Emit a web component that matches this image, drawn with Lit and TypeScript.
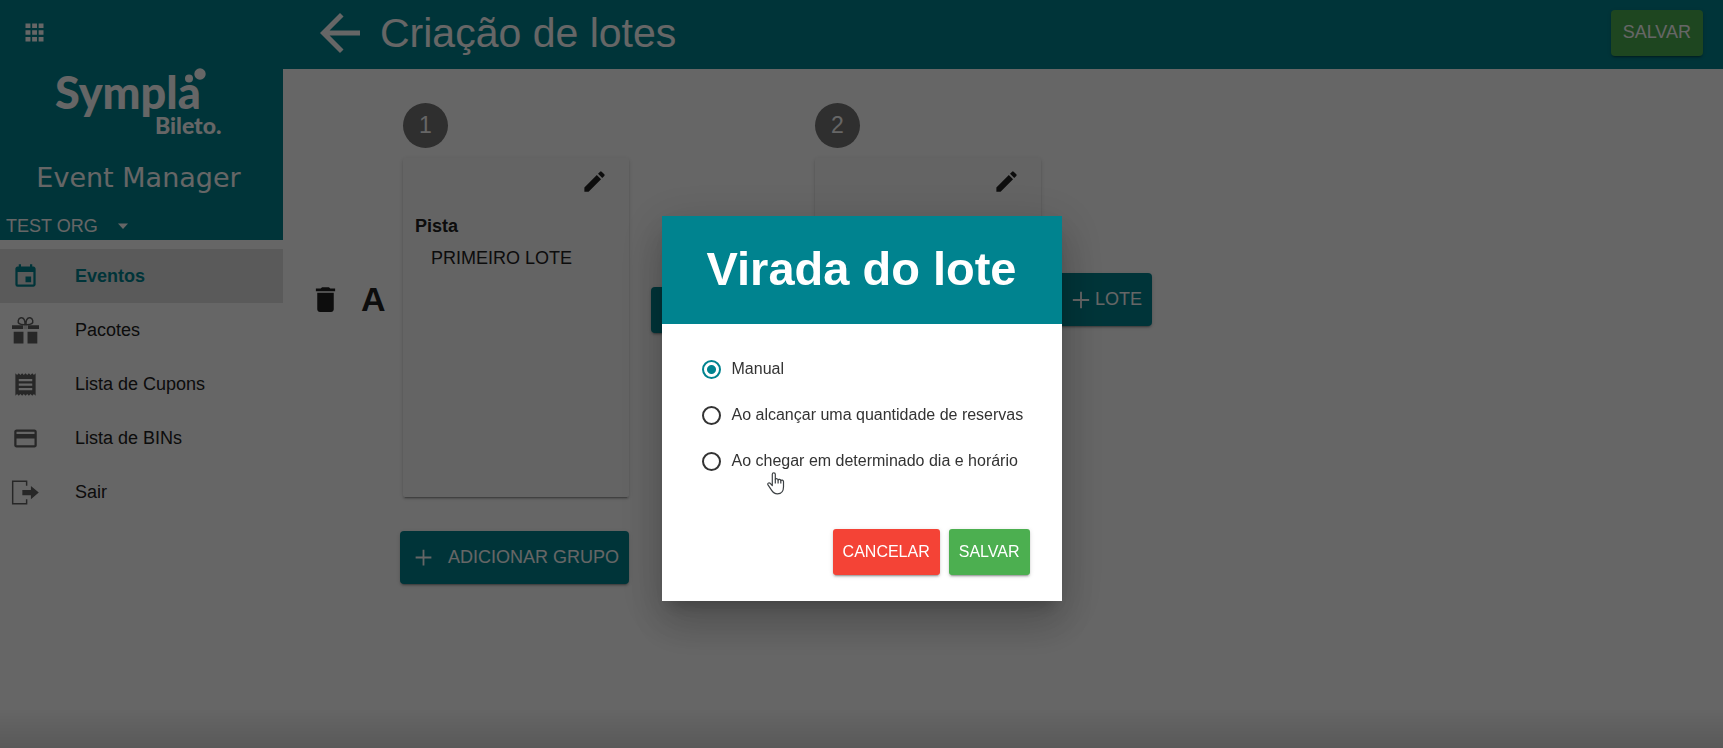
import { LitElement, html, css, svg, nothing } from "lit";
import { customElement, property, state } from "lit/decorators.js";
import { classMap } from "lit/directives/class-map.js";

const icons = {
  apps: svg`<path d="M4 8h4.4V4H4zm5.900 0h4.300V4H9.900zM4 14h4.400v-4H4zm5.900 0h4.300v-4H9.900zM4 20h4.400v-4H4zm5.900 0h4.300v-4H9.900zM15.700 4v4H20V4zm0 10H20v-4h-4.300zm0 6H20v-4h-4.300z"/>`,
  back: svg`<path d="M20 11H7.830l5.590-5.590L12 4l-8 8 8 8 1.410-1.410L7.830 13H20v-2z"/>`,
  edit: svg`<path d="M3 17.250V21h3.750L17.810 9.940l-3.750-3.750L3 17.250zM20.710 7.040a1 1 0 0 0 0-1.410l-2.340-2.340a1 1 0 0 0-1.410 0l-1.830 1.830 3.750 3.750 1.830-1.830z"/>`,
  trash: svg`<path d="M6 19c0 1.100.9 2 2 2h8c1.100 0 2-.9 2-2V7H6v12zM19 4h-3.500l-1-1h-5l-1 1H5v2h14V4z"/>`,
  add: svg`<path d="M19 12.800h-6.200V19h-1.600v-6.200H5v-1.600h6.200V5h1.600v6.200H19z"/>`,
  caret: svg`<path d="M7 9.500l5 5.500 5-5.500z"/>`,
  calendar: svg`<path d="M17 12h-5v5h5v-5zM16 1v2H8V1H6v2H5c-1.110 0-1.990.9-1.990 2L3 19a2 2 0 0 0 2 2h14c1.100 0 2-.9 2-2V5c0-1.100-.9-2-2-2h-1V1h-2zm3 18H5V8h14v11z"/>`,
  gift: svg`<path d="M0 7.300h9.800v3.400H0zM14.200 7.300H24v3.400h-9.800zM1.500 13h8.700v10.500H1.500zM13.800 13h8.700v10.500h-8.700z"/><path d="M10.200 7.500h3.600v3.200h-3.600z" fill-opacity=".25"/><path d="M11.500 6.800C6.500 7 5 5.500 5.600 3 6.200.3 9.500-.3 10.900 2.300c.6 1.200.8 2.800.6 4.500zM12.500 6.800c5 .2 6.500-1.300 5.900-3.800-.6-2.700-3.900-3.300-5.300-.7-.6 1.200-.8 2.800-.6 4.500z" fill="none" stroke="currentColor" stroke-width="1.300"/>`,
  receipt: svg`<path d="M18 17H6v-2h12v2zm0-4H6v-2h12v2zm0-4H6V7h12v2zM3 22l1.500-1.500L6 22l1.500-1.500L9 22l1.500-1.500L12 22l1.500-1.500L15 22l1.500-1.500L18 22l1.500-1.500L21 22V2l-1.500 1.500L18 2l-1.500 1.500L15 2l-1.500 1.500L12 2l-1.500 1.500L9 2 7.500 3.500 6 2 4.500 3.500 3 2v20z"/>`,
  card: svg`<path d="M20 4H4c-1.110 0-1.990.89-1.990 2L2 18c0 1.110.89 2 2 2h16c1.110 0 2-.89 2-2V6c0-1.110-.89-2-2-2zm0 14H4v-6h16v6zm0-10H4V6h16v2z"/>`,
  exit: svg`<path d="M13 6V2H.600v20H13v-4" fill="none" stroke="currentColor" stroke-width="1.300"/><path d="M9.200 9.700h7.600V6.200l7 5.900-7 5.900v-3.500H9.200z"/>`,
};

type IconName = keyof typeof icons;

@customElement("ui-icon")
class UiIcon extends LitElement {
  @property() name: IconName = "add";
  @property({ type: Number }) size = 27;

  static styles = css`
    :host { display: inline-flex; flex: none; }
    .glyph { display: block; fill: currentColor; overflow: visible; }
  `;

  render() {
    return html`<svg class="glyph" width=${this.size} height=${this.size} viewBox="0 0 24 24" aria-hidden="true">${icons[this.name]}</svg>`;
  }
}

interface Entry { label: string; icon: IconName; }

@customElement("side-nav")
class SideNav extends LitElement {
  private entries: Entry[] = [
    { label: "Eventos", icon: "calendar" },
    { label: "Pacotes", icon: "gift" },
    { label: "Lista de Cupons", icon: "receipt" },
    { label: "Lista de BINs", icon: "card" },
    { label: "Sair", icon: "exit" },
  ];

  static styles = css`
    :host { display: block; background: #fff; }
    .head { background: #00838f; color: #fff; padding-top: 19px; }
    .apps { display: block; margin: 0 0 20px 21px; padding: 0; border: 0; background: none; color: inherit; height: 27px; }
    .logo { display: block; margin-left: 54px; fill: #fff; font-family: Lato, "Open Sans", sans-serif; font-weight: 900; }
    .brand { font-size: 45px; }
    .sub { font-size: 23px; }
    .product { margin: 22px 0 18px; padding-right: 6px; text-align: center; font: 27px/32px "DejaVu Sans", Verdana, sans-serif; }
    .org { display: flex; align-items: center; gap: 12px; height: 28px; padding-left: 6px; }
    .select { appearance: none; border: 0; padding: 0; margin: 0; background: none; color: inherit; font: inherit; }
    .list { list-style: none; margin: 0; padding: 9px 0 0; }
    .item { display: flex; align-items: center; gap: 36px; height: 54px; padding-left: 12px; color: #212121; text-decoration: none; }
    .item ui-icon { color: #616161; }
    .active { background: #e0e0e0; color: #00838f; font-weight: bold; }
    .active ui-icon { color: #00838f; }
  `;

  render() {
    return html`
      <header class="head">
        <button class="apps" aria-label="Aplicativos"><ui-icon name="apps"></ui-icon></button>
        <svg class="logo" width="170" height="74" viewBox="0 0 170 74">
          <text class="brand" x="1" y="43">Sympla</text>
          <circle cx="135" cy="12.500" r="4" />
          <circle cx="146" cy="8" r="5.700" />
          <text class="sub" x="101" y="68">Bileto.</text>
        </svg>
        <div class="product">Event Manager</div>
        <div class="org">
          <select class="select" aria-label="Organização"><option>TEST ORG</option></select>
          <ui-icon name="caret" size="24"></ui-icon>
        </div>
      </header>
      <nav>
        <ul class="list">
          ${this.entries.map((e, i) => html`<li>
            <a href="#" class=${classMap({ item: true, active: i === 0 })}><ui-icon name=${e.icon}></ui-icon>${e.label}</a>
          </li>`)}
        </ul>
      </nav>
    `;
  }
}

@customElement("lot-card")
class LotCard extends LitElement {
  @property() sector = "";
  @property() lot = "";

  static styles = css`
    :host { display: block; box-sizing: border-box; background: #fafafa; padding: 10px 12px; border-radius: 2px;
      box-shadow: 0 3px 1px -2px rgba(0,0,0,.2), 0 2px 2px rgba(0,0,0,.14), 0 1px 5px rgba(0,0,0,.12); }
    .edit { display: block; margin: 0 9px 0 auto; padding: 0; border: 0; background: none; color: #212121; height: 27px; }
    .sector { margin: 19px 0 8px; font-size: 18px; line-height: 24px; font-weight: bold; }
    .lot { margin: 0 0 0 16px; line-height: 24px; }
  `;

  render() {
    return html`
      <button class="edit" aria-label="Editar"><ui-icon name="edit"></ui-icon></button>
      ${this.sector ? html`<h2 class="sector">${this.sector}</h2><p class="lot">${this.lot}</p>` : nothing}
    `;
  }
}

@customElement("turn-dialog")
class TurnDialog extends LitElement {
  @state() private selected = 0;
  private options = [
    "Manual",
    "Ao alcançar uma quantidade de reservas",
    "Ao chegar em determinado dia e horário",
  ];

  static styles = css`
    :host { position: relative; display: block; width: 400px; background: #fff; color: #333; font-size: 16px;
      box-shadow: 0 11px 15px -7px rgba(0,0,0,.2), 0 24px 38px 3px rgba(0,0,0,.14), 0 9px 46px 8px rgba(0,0,0,.12); }
    .title { margin: 0; padding: 25px 0 27px; background: #00838f; color: #fff; text-align: center; font-size: 47px; line-height: 56px; }
    .options { display: flex; flex-direction: column; gap: 22px; margin: 0; border: 0; padding: 33px 0 0 40px; }
    .option { display: flex; align-items: center; gap: 11px; line-height: 24px; white-space: nowrap; }
    .radio { appearance: none; flex: none; box-sizing: border-box; width: 19px; height: 19px; margin: 0; border: 2px solid #333; border-radius: 50%; }
    .radio:checked { border-color: #00838f; background: radial-gradient(circle, #00838f 4px, transparent 5px); }
    .actions { display: flex; justify-content: flex-end; gap: 9px; padding: 56px 32px 26px; }
    .button { height: 46px; padding: 0 10px; border: 0; border-radius: 3px; color: #fff; font: inherit;
      box-shadow: 0 3px 1px -2px rgba(0,0,0,.2), 0 2px 2px rgba(0,0,0,.14), 0 1px 5px rgba(0,0,0,.12); }
    .cancel { background: #f44336; }
    .save { background: #4caf50; }
    .pointer { position: absolute; left: 105px; top: 256px; }
  `;

  render() {
    return html`
      <h1 class="title" id="title">Virada do lote</h1>
      <fieldset class="options" aria-labelledby="title">
        ${this.options.map((o, i) => html`<label class="option">
          <input class="radio" type="radio" name="turn" .checked=${this.selected === i} @change=${() => (this.selected = i)} />${o}
        </label>`)}
      </fieldset>
      <div class="actions">
        <button class="button cancel">CANCELAR</button>
        <button class="button save">SALVAR</button>
      </div>
      <svg class="pointer" width="18" height="23" viewBox="0 0 18 23" fill="#fff" stroke="#3c4043" stroke-width="1.200" stroke-linejoin="round" aria-hidden="true">
        <path d="M5.300 13.500V2.300c0-2 3-2 3 0v5.200c.4-1.200 2.700-1 2.800.5.500-1 2.500-.8 2.700.6.700-.9 2.600-.6 2.700 1v5.200c0 4.400-2.300 7-6 7-3 0-4.500-1.200-6-3.700L1 12.900c-.9-1.500.9-2.700 2.200-1.600z" />
        <path d="M8.300 7.500v4M11.100 8v3.500M13.800 8.600v3" fill="none" />
      </svg>
    `;
  }
}

@customElement("app-root")
class AppRoot extends LitElement {
  static styles = css`
    :host { display: block; font-family: "Liberation Sans", Arial, sans-serif; font-size: 18px; color: #212121; }
    .page { display: grid; grid-template-columns: 283px 1fr; min-height: 100vh; background: #fff; }
    .bar { display: flex; align-items: center; height: 69px; padding: 0 20px 4px 27px; box-sizing: border-box; background: #00838f; color: #fff; }
    .plain { border: 0; padding: 0; background: none; color: inherit; display: flex; }
    .heading { flex: 1; margin: 0 0 0 10px; font-size: 41px; line-height: 48px; font-weight: normal; }
    .button { display: inline-flex; align-items: center; border: 0; border-radius: 4px; background: #00838f; color: #fff; font: inherit; height: 53px; box-sizing: border-box;
      box-shadow: 0 3px 1px -2px rgba(0,0,0,.2), 0 2px 2px rgba(0,0,0,.14), 0 1px 5px rgba(0,0,0,.12); }
    .save { height: 46px; padding: 0 12px; background: #4caf50; }
    .board { display: grid; grid-template-columns: 120px 226px 186px 226px auto; grid-template-rows: 45px 339px auto; padding-top: 34px; row-gap: 10px; justify-content: start; }
    .step { display: grid; place-items: center; width: 45px; height: 45px; border-radius: 50%; background: #757575; color: #fff; font-size: 23px; }
    .first { grid-column: 2; }
    .second { grid-column: 4; }
    .group { grid-column: 1; display: flex; align-items: center; gap: 19px; height: 53px; margin-top: 115px; padding-left: 26px; }
    .letter { font-size: 34px; font-weight: bold; }
    .turn { width: 142px; height: 46px; margin: 129px 22px 0; }
    .lot { margin: 115px 0 0 15px; padding: 0 10px 0 11px; }
    .addgroup { grid-column: 1 / 3; justify-self: end; gap: 11px; margin-top: 24px; padding: 0 10px; }
    .scrim { position: fixed; inset: 0; box-sizing: border-box; display: grid; place-items: center; padding-top: 69px;
      background: linear-gradient(to top, rgba(0,0,0,.13), transparent 40px), rgba(0,0,0,.6); }
  `;

  render() {
    return html`
      <div class="page">
        <side-nav></side-nav>
        <main>
          <header class="bar">
            <button class="plain" aria-label="Voltar"><ui-icon name="back" size="60"></ui-icon></button>
            <h1 class="heading">Criação de lotes</h1>
            <button class="button save">SALVAR</button>
          </header>
          <section class="board">
            <div class="step first">1</div>
            <div class="step second">2</div>
            <div class="group">
              <button class="plain" aria-label="Excluir"><ui-icon name="trash" size="33"></ui-icon></button>
              <span class="letter">A</span>
            </div>
            <lot-card sector="Pista" lot="PRIMEIRO LOTE"></lot-card>
            <button class="button turn" aria-label="Virada do lote"></button>
            <lot-card></lot-card>
            <button class="button lot"><ui-icon name="add" size="28"></ui-icon>LOTE</button>
            <button class="button addgroup"><ui-icon name="add" size="27"></ui-icon>ADICIONAR GRUPO</button>
          </section>
        </main>
      </div>
      <div class="scrim"><turn-dialog role="dialog" aria-modal="true" aria-label="Virada do lote"></turn-dialog></div>
    `;
  }
}
